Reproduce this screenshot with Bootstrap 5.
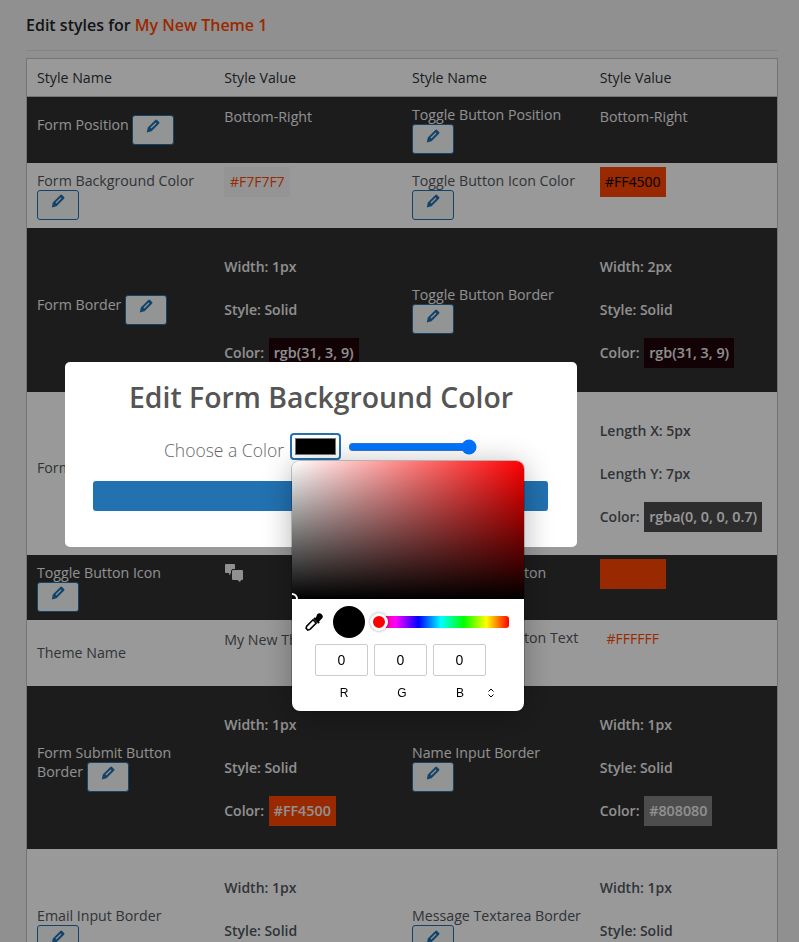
<!DOCTYPE html>
<html lang="en">

<head>
  <meta charset="UTF-8" />
  <meta name="viewport" content="width=device-width, initial-scale=1" />
  <title>Edit styles</title>
  <link href="https://cdn.jsdelivr.net/npm/bootstrap@5.3.0/dist/css/bootstrap.min.css" rel="stylesheet" />
  <style>
    html, body { height: 100%; overflow: hidden; }

    body {
      background: #f0f0f1;
      font-family: "Open Sans", "Noto Sans", sans-serif;
      font-size: 14.2px;
      color: #50575e;
    }

    .page-wrap { padding: 15px 21px 0 26px; }

    .page-title {
      font-size: 16px;
      font-weight: 600;
      line-height: 20px;
      color: #1d2327;
      padding-bottom: 15px;
      margin: 0 0 7px;
      border-bottom: 1px solid #dcdcde;
    }

    .page-title span { color: #ff4500; }

    .styles-table {
      table-layout: fixed;
      width: 100%;
      background: #fff;
      border: 1px solid #c3c4c7;
      line-height: 19px;
    }

    .styles-table th {
      font-weight: 400;
      color: #2c3338;
      padding: 9px 10px;
      border-bottom: 1px solid #c3c4c7;
    }

    .styles-table td { padding: 8px 10px; vertical-align: middle; }
    .styles-table td.val-cell { padding-top: 4px; vertical-align: top; }
    .styles-table td.val-stack { padding: 18px 10px 17px; vertical-align: middle; }
    .styles-table .tall-row td { height: 66px; }
    .styles-table .short-row td.val-stack { padding-bottom: 16px; }

    .dark-row { background: #2f2f2f; color: #f0f0f1; }

    .edit-btn {
      width: 42px;
      height: 30px;
      padding: 0 0 7px;
      display: inline-block;
      vertical-align: top;
      background: #f6f7f7;
      border: 1px solid #2271b1;
      border-radius: 3px;
      color: #2271b1;
      line-height: 1;
    }

    .edit-btn svg { width: 14px; height: 14px; display: block; margin: 0 auto; }

    .val-text { display: inline-block; padding: 6px 0 4px; line-height: 20px; }

    .swatch {
      display: inline-block;
      padding: 5px;
      font-size: 14px;
      line-height: 20px;
      min-width: 66px;
      text-align: center;
    }

    .stack-line { margin: 0; height: 43px; font-size: 14px; line-height: 30px; padding-top: 6px; font-weight: 600; white-space: nowrap; }
    .stack-line .swatch { font-size: 14.3px; font-weight: 600; padding: 0 5px; line-height: 30px; margin-left: 1px; }

    .icon-chat { width: 20px; height: 20px; display: block; margin-top: 4px; }

    .dim-layer { background: #000; opacity: .4; position: fixed; inset: 0; }

    .edit-modal {
      position: fixed;
      left: 65px;
      top: 362px;
      width: 512px;
      height: 185px;
      background: #fff;
      border-radius: 5px;
      padding: 15px 28px;
      text-align: center;
    }

    .edit-modal h2 {
      font-size: 28.4px;
      font-weight: 600;
      line-height: 40px;
      color: #555;
      margin: 0 0 16px;
    }

    .color-row { height: 27px; margin-bottom: 21px; padding-left: 71px; }
    .color-label { font-size: 17.5px; font-weight: 300; color: #666; margin: 8px 6px 0 0; }

    .color-input {
      width: 51px;
      height: 27px;
      border: 2px solid #2271b1;
      border-radius: 4px;
      background: #fff;
      padding: 3px;
    }

    .range-input { width: 129px; margin: 0 0 0 7px; }

    .save-btn {
      width: 455px;
      height: 30px;
      background: #2271b1;
      border: 0;
      border-radius: 3px;
      color: #fff;
      display: block;
    }

    .picker-pop {
      position: fixed;
      left: 292px;
      top: 461px;
      width: 232px;
      height: 250px;
      background: #fff;
      border-radius: 8px;
      box-shadow: 0 0 0 1px rgba(0, 0, 0, .2), 0 4px 30px rgba(0, 0, 0, .3);
      overflow: hidden;
      font-family: "Liberation Sans", Arial, sans-serif;
      font-size: 12px;
      color: #000;
    }

    .sat-box {
      height: 138px;
      position: relative;
      overflow: hidden;
      background: linear-gradient(to top, #000, transparent), linear-gradient(to right, #fff, #f00);
    }

    .sat-dot {
      position: absolute;
      left: -6px;
      bottom: -6px;
      width: 12px;
      height: 12px;
      border: 2px solid #fff;
      border-radius: 50%;
    }

    .tool-row { padding: 1px 15px 0 13px; gap: 10px; height: 45px; }
    .swatch-dot { width: 32px; height: 32px; border-radius: 50%; background: #000; flex: none; }
    .hue-wrap { position: relative; flex: 1; height: 12px; border-radius: 0 3px 3px 0; margin-left: -2px;
      background: linear-gradient(to right, #f00, #f0f, #00f, #0ff, #0f0, #ff0, #f00); }
    .hue-thumb { position: absolute; left: -3px; top: -3px; width: 18px; height: 18px; border-radius: 50%; background: #f00; border: 3px solid #fff; box-shadow: 0 0 3px rgba(0, 0, 0, .4); }

    .rgb-row { padding: 0 0 0 23px; gap: 6px; }
    .rgb-box { width: 53px; height: 32px; border: 1px solid #ccc; border-radius: 2px; text-align: center; line-height: 30px; font-size: 14px; }
    .rgb-labels { padding: 9px 0 0 26px; gap: 6px; line-height: 16px; }
    .rgb-labels span { width: 52px; text-align: center; }
    .rgb-spin { width: 8px; height: 12px; margin: 2px 0 0 -5px; }
  </style>
</head>

<body>
  <div class="page-wrap">
    <h1 class="page-title">Edit styles for <span>My New Theme 1</span></h1>

    <table class="styles-table">
      <thead>
        <tr>
          <th>Style Name</th>
          <th>Style Value</th>
          <th>Style Name</th>
          <th>Style Value</th>
        </tr>
      </thead>
      <tbody>
        <tr class="dark-row tall-row">
          <td>Form Position <button class="edit-btn"><svg viewBox="0 0 14 14"><use href="#pencil" /></svg></button></td>
          <td class="val-cell"><span class="val-text">Bottom-Right</span></td>
          <td>Toggle Button Position <button class="edit-btn"><svg viewBox="0 0 14 14"><use href="#pencil" /></svg></button></td>
          <td class="val-cell"><span class="val-text">Bottom-Right</span></td>
        </tr>
        <tr>
          <td>Form Background Color <button class="edit-btn"><svg viewBox="0 0 14 14"><use href="#pencil" /></svg></button></td>
          <td class="val-cell"><span class="swatch" style="background:#f7f7f7;color:#ff4500">#F7F7F7</span></td>
          <td>Toggle Button Icon Color <button class="edit-btn"><svg viewBox="0 0 14 14"><use href="#pencil" /></svg></button></td>
          <td class="val-cell"><span class="swatch" style="background:#ff4500;color:#000">#FF4500</span></td>
        </tr>
        <tr class="dark-row">
          <td>Form Border <button class="edit-btn"><svg viewBox="0 0 14 14"><use href="#pencil" /></svg></button></td>
          <td class="val-stack">
            <p class="stack-line">Width: 1px</p>
            <p class="stack-line">Style: Solid</p>
            <p class="stack-line">Color: <span class="swatch" style="background:#1f0309">rgb(31, 3, 9)</span></p>
          </td>
          <td>Toggle Button Border <button class="edit-btn"><svg viewBox="0 0 14 14"><use href="#pencil" /></svg></button></td>
          <td class="val-stack">
            <p class="stack-line">Width: 2px</p>
            <p class="stack-line">Style: Solid</p>
            <p class="stack-line">Color: <span class="swatch" style="background:#1f0309">rgb(31, 3, 9)</span></p>
          </td>
        </tr>
        <tr class="short-row">
          <td>Form Box Shadow <button class="edit-btn"><svg viewBox="0 0 14 14"><use href="#pencil" /></svg></button></td>
          <td class="val-stack">
            <p class="stack-line">Length X: 5px</p>
            <p class="stack-line">Length Y: 7px</p>
            <p class="stack-line">Color: <span class="swatch" style="background:rgba(0,0,0,.7);color:#fff">rgba(0, 0, 0, 0.7)</span></p>
          </td>
          <td>Toggle Button Shadow <button class="edit-btn"><svg viewBox="0 0 14 14"><use href="#pencil" /></svg></button></td>
          <td class="val-stack">
            <p class="stack-line">Length X: 5px</p>
            <p class="stack-line">Length Y: 7px</p>
            <p class="stack-line">Color: <span class="swatch" style="background:rgba(0,0,0,.7);color:#fff">rgba(0, 0, 0, 0.7)</span></p>
          </td>
        </tr>
        <tr class="dark-row">
          <td>Toggle Button Icon <button class="edit-btn"><svg viewBox="0 0 14 14"><use href="#pencil" /></svg></button></td>
          <td class="val-cell"><svg class="icon-chat" viewBox="0 0 20 20"><path fill="#f0f0f1" d="M2 1h8a1 1 0 0 1 1 1v7a1 1 0 0 1-1 1H7l-1.500 2.500L5 10H2a1 1 0 0 1-1-1V2a1 1 0 0 1 1-1z" /><path fill="#f0f0f1" stroke="#2f2f2f" d="M9 6.500h9a1.500 1.500 0 0 1 1.500 1.500v8a1.500 1.500 0 0 1-1.500 1.500h-1l-.5 2.500-3-2.500H9A1.500 1.500 0 0 1 7.500 16V8A1.500 1.500 0 0 1 9 6.500z" /></svg></td>
          <td>Form Submit Button <button class="edit-btn"><svg viewBox="0 0 14 14"><use href="#pencil" /></svg></button></td>
          <td class="val-cell"><span class="swatch" style="background:#ff4500;color:#ff4500">#FF4500</span></td>
        </tr>
        <tr class="tall-row">
          <td>Theme Name</td>
          <td class="val-cell"><span class="val-text">My New Theme 1</span></td>
          <td>Form Submit Button Text <button class="edit-btn"><svg viewBox="0 0 14 14"><use href="#pencil" /></svg></button></td>
          <td class="val-cell"><span class="swatch" style="background:#fff;color:#ff4500">#FFFFFF</span></td>
        </tr>
        <tr class="dark-row short-row">
          <td>Form Submit Button Border <button class="edit-btn"><svg viewBox="0 0 14 14"><use href="#pencil" /></svg></button></td>
          <td class="val-stack">
            <p class="stack-line">Width: 1px</p>
            <p class="stack-line">Style: Solid</p>
            <p class="stack-line">Color: <span class="swatch" style="background:#ff4500">#FF4500</span></p>
          </td>
          <td>Name Input Border <button class="edit-btn"><svg viewBox="0 0 14 14"><use href="#pencil" /></svg></button></td>
          <td class="val-stack">
            <p class="stack-line">Width: 1px</p>
            <p class="stack-line">Style: Solid</p>
            <p class="stack-line">Color: <span class="swatch" style="background:#808080">#808080</span></p>
          </td>
        </tr>
        <tr>
          <td>Email Input Border <button class="edit-btn"><svg viewBox="0 0 14 14"><use href="#pencil" /></svg></button></td>
          <td class="val-stack">
            <p class="stack-line">Width: 1px</p>
            <p class="stack-line">Style: Solid</p>
            <p class="stack-line">Color: <span class="swatch" style="background:#808080;color:#fff">#808080</span></p>
          </td>
          <td><span class="text-nowrap">Message Textarea Border</span> <button class="edit-btn"><svg viewBox="0 0 14 14"><use href="#pencil" /></svg></button></td>
          <td class="val-stack">
            <p class="stack-line">Width: 1px</p>
            <p class="stack-line">Style: Solid</p>
            <p class="stack-line">Color: <span class="swatch" style="background:#808080;color:#fff">#808080</span></p>
          </td>
        </tr>
      </tbody>
    </table>
  </div>

  <svg width="0" height="0" class="position-absolute">
    <symbol id="pencil" viewBox="0 0 14 14">
      <path fill="currentColor" fill-rule="evenodd" d="M.8 13.600 1.800 8.500 9.300 1 10.500.4 13.600 3.500 13 4.700 5.500 12.300ZM4.500 8.600 9.600 3.600 10.400 4.400 5.300 9.400Z" />
    </symbol>
  </svg>

  <div class="dim-layer"></div>

  <div class="edit-modal">
    <h2>Edit Form Background Color</h2>
    <div class="color-row d-flex align-items-center">
      <label class="color-label">Choose a Color</label>
      <input class="color-input" type="color" value="#000000" />
      <input class="range-input" type="range" value="100" />
    </div>
    <button class="save-btn">Save</button>
  </div>

  <div class="picker-pop">
    <div class="sat-box"><div class="sat-dot"></div></div>
    <div class="tool-row d-flex align-items-center">
      <svg width="18" height="18" viewBox="0 0 18 18"><path d="M12.200 1.300a2.500 2.500 0 0 1 4.500 4.500l-2.700 2.600.9.900-1.500 1.500-5.100-5.100 1.500-1.500.9.900z" fill="#000" /><path d="M8 6.800 11.300 10.100 5 16.400 2.800 17 1.100 15.300 1.700 13.100Z" fill="#fff" stroke="#000" stroke-width="1.600" /></svg>
      <div class="swatch-dot"></div>
      <div class="hue-wrap"><div class="hue-thumb"></div></div>
    </div>
    <div class="rgb-row d-flex">
      <div class="rgb-box">0</div>
      <div class="rgb-box">0</div>
      <div class="rgb-box">0</div>
    </div>
    <div class="rgb-labels d-flex">
      <span>R</span>
      <span>G</span>
      <span>B</span>
      <svg class="rgb-spin" viewBox="0 0 8 12"><path d="M1.500 4.500 4 2l2.500 2.500M1.500 7.500 4 10l2.500-2.500" fill="none" stroke="#000" /></svg>
    </div>
  </div>

  <script src="https://cdn.jsdelivr.net/npm/bootstrap@5.3.0/dist/js/bootstrap.bundle.min.js"></script>
</body>

</html>
